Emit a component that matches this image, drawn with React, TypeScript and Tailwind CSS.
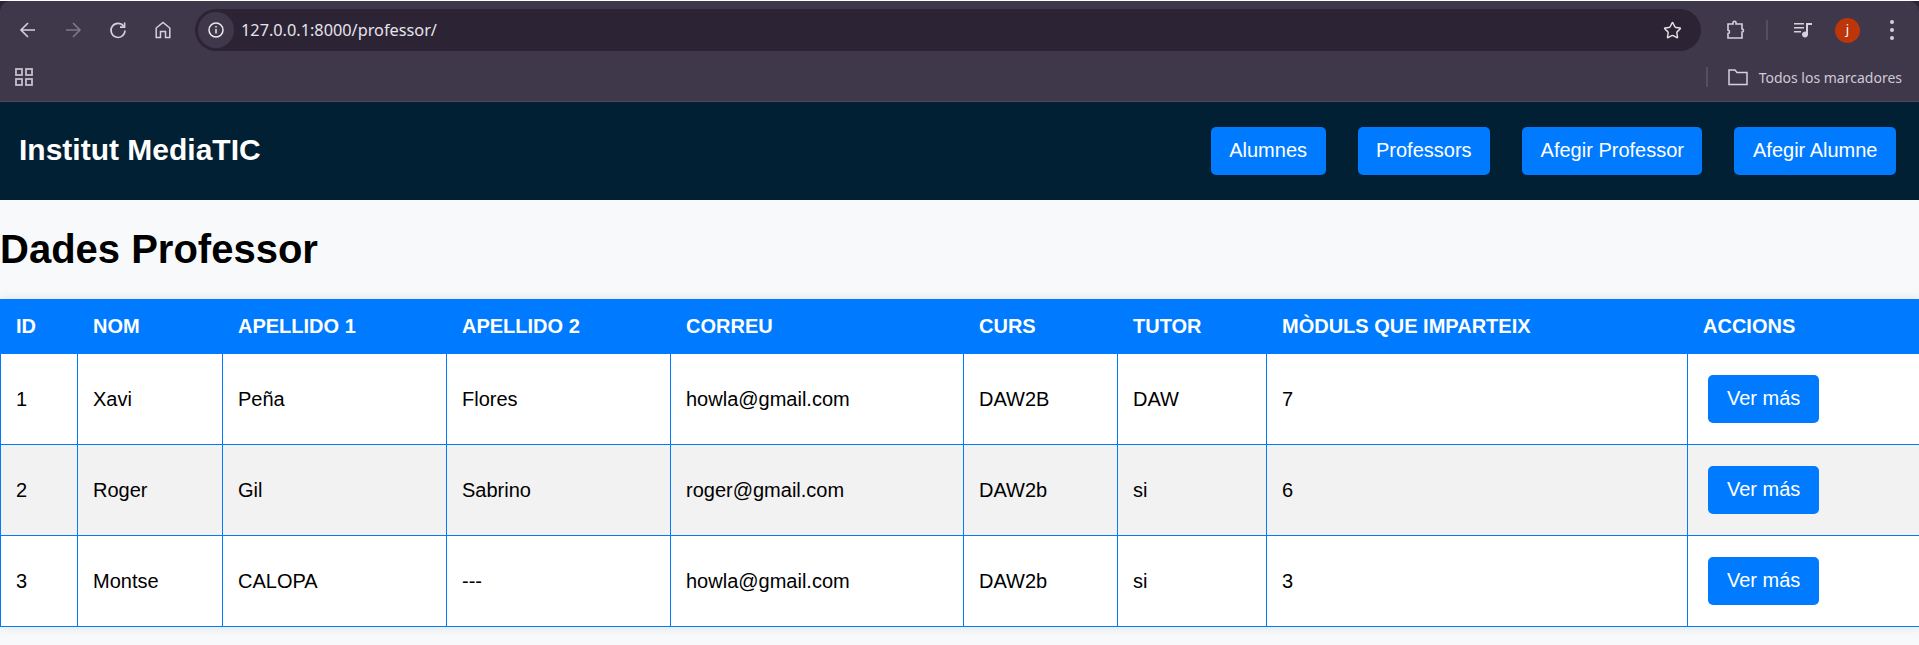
import { Star } from "lucide-react";

const rows = [
  { id: 1, nom: "Xavi", ap1: "Peña", ap2: "Flores", correu: "howla@gmail.com", curs: "DAW2B", tutor: "DAW", moduls: 7 },
  { id: 2, nom: "Roger", ap1: "Gil", ap2: "Sabrino", correu: "roger@gmail.com", curs: "DAW2b", tutor: "si", moduls: 6 },
  { id: 3, nom: "Montse", ap1: "CALOPA", ap2: "---", correu: "howla@gmail.com", curs: "DAW2b", tutor: "si", moduls: 3 },
];

const heads = [
  { label: "ID", w: "w-[77px]" },
  { label: "NOM", w: "w-[145px]" },
  { label: "APELLIDO 1", w: "w-[224px]" },
  { label: "APELLIDO 2", w: "w-[224px]" },
  { label: "CORREU", w: "w-[293px]" },
  { label: "CURS", w: "w-[154px]" },
  { label: "TUTOR", w: "w-[149px]" },
  { label: "MÒDULS QUE IMPARTEIX", w: "w-[421px]" },
  { label: "ACCIONS", w: "w-[232px]" },
];

const navLinks = ["Alumnes", "Professors", "Afegir Professor", "Afegir Alumne"];

function BrowserChrome() {
  return (
    <div className="bg-[#2a2235]">
      <div className="h-[101px] rounded-t-[10px] bg-[#3f384b] mt-px border-b border-[#4f4a58] font-['Noto_Sans',sans-serif]">
        <div className="flex h-[58px] items-center pl-[5px] pr-[15px]">
          <div className="flex w-[45px] justify-center">
            <svg width="20" height="20" viewBox="0 0 20 20" fill="none" stroke="#d5d0dc" strokeWidth="1.6">
              <path d="M17 10H3.5M10 3L3 10l7 7" />
            </svg>
          </div>
          <div className="flex w-[45px] justify-center">
            <svg width="20" height="20" viewBox="0 0 20 20" fill="none" stroke="#7d7786" strokeWidth="1.6">
              <path d="M3 10h13.5M10 3l7 7-7 7" />
            </svg>
          </div>
          <div className="flex w-[45px] justify-center">
            <svg width="20" height="20" viewBox="0 0 20 20" fill="none" stroke="#d5d0dc" strokeWidth="1.6">
              <path d="M15.6 6.2A7 7 0 1 0 17 10.5" />
              <path d="M16.6 2.5v4.6H12" />
            </svg>
          </div>
          <div className="flex w-[45px] justify-center">
            <svg width="20" height="20" viewBox="0 0 20 20" fill="none" stroke="#d5d0dc" strokeWidth="1.5">
              <path d="M3.2 17.5V8L10 2.5 16.8 8v9.5h-4.3v-6h-5v6z" />
            </svg>
          </div>
          <div className="ml-[10px] flex h-[42px] flex-1 items-center rounded-full bg-[#2c2435] pl-[3px]">
            <div className="flex h-[36px] w-[36px] items-center justify-center rounded-full bg-[#3f384b]">
              <svg width="18" height="18" viewBox="0 0 18 18" fill="none" stroke="#ebe8ef" strokeWidth="1.5">
                <circle cx="9" cy="9" r="7" />
                <path d="M9 8v4.5M9 5v1.6" />
              </svg>
            </div>
            <span className="ml-[7px] flex-1 text-[16.3px] text-[#e6e3ea]">127.0.0.1:8000/professor/</span>
            <Star className="mr-[19px] h-[19px] w-[19px] text-[#e3e0e7]" strokeWidth={1.8} />
          </div>
          <div className="ml-[24px] flex w-[22px] justify-center">
            <svg width="22" height="22" viewBox="0 0 22 22" fill="none" stroke="#d5d0dc" strokeWidth="1.6">
              <path d="M3 5h5V3.4c0-1.6 3-1.6 3 0V5h6v5c2 0 2 3 0 3v6H3v-4.5c2 0 2-3.2 0-3.2z" />
            </svg>
          </div>
          <div className="ml-[19px] h-[20px] w-[2px] bg-[#544e5e]" />
          <div className="ml-[25px] flex w-[20px] justify-center">
            <svg width="20" height="20" viewBox="0 0 20 20" fill="#d5d0dc">
              <path d="M1 3h10v1.6H1zM1 7h10v1.6H1zM1 11h7v1.6H1zM13 3h6v2h-4v9.5a3 3 0 1 1-2-2.8z" />
            </svg>
          </div>
          <div className="ml-[22px] flex h-[25px] w-[25px] items-center justify-center rounded-full bg-[#bd3609] text-[13px] text-white">
            j
          </div>
          <div className="ml-[20px] flex w-[24px] flex-col items-center gap-[4px]">
            <span className="h-[4px] w-[4px] rounded-full bg-[#d5d0dc]" />
            <span className="h-[4px] w-[4px] rounded-full bg-[#d5d0dc]" />
            <span className="h-[4px] w-[4px] rounded-full bg-[#d5d0dc]" />
          </div>
        </div>
        <div className="flex h-[36px] items-center pl-[15px]">
          <svg width="18" height="18" viewBox="0 0 18 18" fill="none" stroke="#c4bfcb" strokeWidth="1.8">
            <rect x="1" y="1" width="6" height="6" />
            <rect x="11" y="1" width="6" height="6" />
            <rect x="1" y="11" width="6" height="6" />
            <rect x="11" y="11" width="6" height="6" />
          </svg>
          <div className="ml-auto h-[20px] w-[2px] bg-[#544e5e]" />
          <svg className="ml-[20px]" width="20" height="18" viewBox="0 0 20 18" fill="none" stroke="#d5d0dc" strokeWidth="1.5">
            <path d="M1 16.5V2h6l2 2.5h10v12z" />
          </svg>
          <span className="ml-[11px] mr-[17px] text-[14px] text-[#cfcbd5]">Todos los marcadores</span>
        </div>
      </div>
    </div>
  );
}

export default function App() {
  return (
    <div className="min-h-[645px] bg-[#f8f9fa] font-['Liberation_Sans',Arial,sans-serif] text-black">
      <BrowserChrome />
      <header className="flex h-[98px] items-center justify-between bg-[#012033] px-[19px] pr-[23px]">
        <h2 className="pb-[3px] text-[30px] font-bold text-white">Institut MediaTIC</h2>
        <nav className="flex gap-[32px]">
          {navLinks.map((l) => (
            <a key={l} className="rounded-[5px] bg-[#007bff] px-[18.5px] pt-[12px] pb-[14px] text-[20px] leading-[22px] text-white">
              {l}
            </a>
          ))}
        </nav>
      </header>
      <h1 className="pt-[26px] text-[40px] font-bold leading-[46px]">Dades Professor</h1>
      <table className="mt-[27px] w-full table-fixed border-collapse bg-white text-[20px] shadow-[0_0_10px_rgba(0,0,0,0.1)]">
        <thead>
          <tr className="h-[54px] bg-[#007bff] text-white">
            {heads.map((h) => (
              <th key={h.label} className={`${h.w} border border-[#007bff] px-[15px] pb-[2px] text-left font-bold`}>
                {h.label}
              </th>
            ))}
          </tr>
        </thead>
        <tbody>
          {rows.map((r, i) => (
            <tr key={r.id} className={i % 2 === 1 ? "bg-[#f2f2f2]" : "bg-white"}>
              {[r.id, r.nom, r.ap1, r.ap2, r.correu, r.curs, r.tutor, r.moduls].map((v, j) => (
                <td key={j} className="border border-[#007bff] px-[15px]">
                  {v}
                </td>
              ))}
              <td className="border border-[#007bff] px-[15px] py-[16px]">
                <a className="m-[5px] inline-block rounded-[5px] bg-[#007bff] px-[19px] pt-[12px] pb-[14px] leading-[22px] text-white">
                  Ver más
                </a>
              </td>
            </tr>
          ))}
        </tbody>
      </table>
    </div>
  );
}
